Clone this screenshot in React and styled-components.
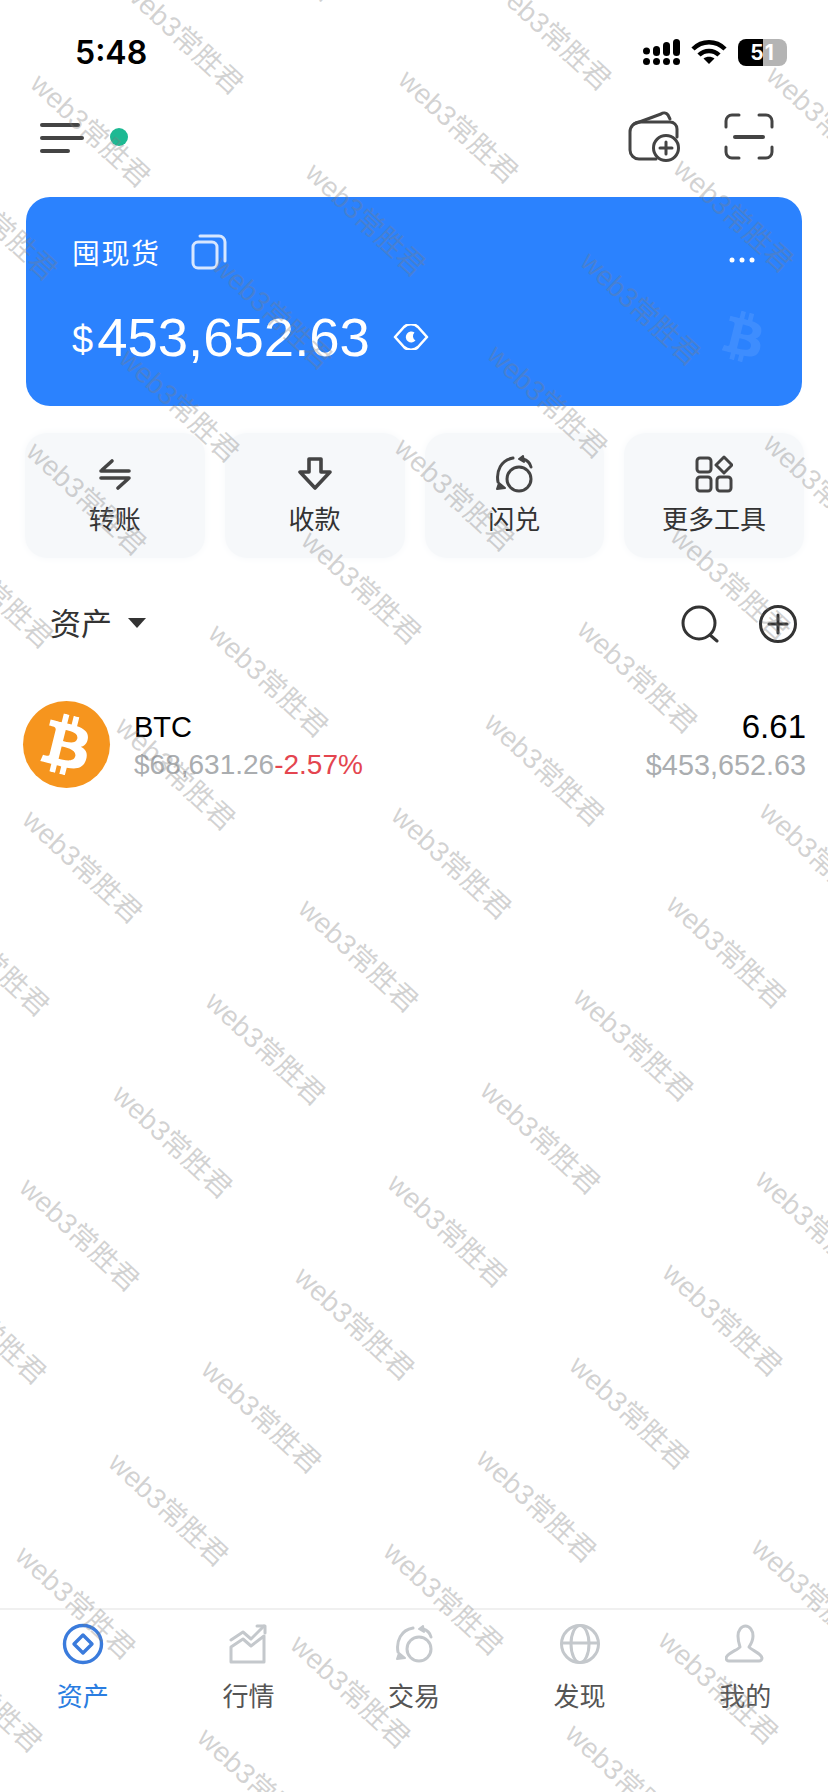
import React from 'react';
import styled, { createGlobalStyle } from 'styled-components';
import { FaBtc } from 'react-icons/fa';

const GlobalStyle = createGlobalStyle`
  * { box-sizing: border-box; }
  html, body { margin: 0; padding: 0; background: #fff; }
  body { font-family: "Liberation Sans", "Noto Sans CJK SC", sans-serif; }
`;

const Page = styled.div`
  position: relative;
  width: 828px;
  height: 1792px;
  overflow: hidden;
  display: flex;
  flex-direction: column;
  background: #fff;
`;

const StatusBar = styled.div`
  height: 104px;
  padding: 0 41px 0 75px;
  display: flex;
  align-items: center;
  justify-content: space-between;
`;

const Clock = styled.span`
  font-family: Inter, "Liberation Sans", sans-serif;
  font-size: 32px;
  font-weight: 600;
  color: #000;
`;

const StatusIcons = styled.div`
  display: flex;
  align-items: center;
  gap: 11px;
`;

const Battery = styled.div`
  width: 49px;
  height: 27px;
  border-radius: 8px;
  background: linear-gradient(90deg, #000 0 52%, #b4b4b4 52% 100%);
  color: #fff;
  font-family: Inter, "Liberation Sans", sans-serif;
  font-size: 21px;
  font-weight: 700;
  display: flex;
  align-items: center;
  justify-content: center;
  letter-spacing: 1px;
`;

const TopBar = styled.div`
  height: 66px;
  padding: 0 54px 0 39px;
  display: flex;
  align-items: center;
  justify-content: space-between;
`;

const IconGroup = styled.div`
  display: flex;
  align-items: center;
  gap: ${(p) => p.$gap}px;
`;

const OnlineDot = styled.span`
  width: 18px;
  height: 18px;
  border-radius: 50%;
  background: #1db993;
`;

const WalletCard = styled.div`
  margin: 27px 26px 0;
  height: 209px;
  padding: 37px 47px 0 46px;
  border-radius: 24px;
  background: #2b82fe;
  color: #fff;
`;

const CardTitleRow = styled.div`
  display: flex;
  align-items: center;
  height: 36px;
`;

const CardTitle = styled.span`
  font-size: 28px;
  letter-spacing: 1.5px;
  margin-right: 30px;
`;

const CardMenu = styled.span`
  display: flex;
  margin: 16px 0 0 auto;
`;

const BalanceRow = styled.div`
  display: flex;
  align-items: center;
  margin-top: 39px;
  height: 56px;
`;

const Dollar = styled.span`
  font-size: 38px;
  margin-right: 4px;
  padding-top: 6px;
`;

const Amount = styled.span`
  font-size: 54.5px;
  margin-right: 23px;
`;

const GhostCoin = styled(FaBtc)`
  margin: 0 -14px 0 auto;
  font-size: 50px;
  color: rgba(255, 255, 255, 0.09);
  transform: rotate(14deg);
`;

const Actions = styled.div`
  margin-top: 27px;
  padding: 0 24px 0 25px;
  display: grid;
  grid-template-columns: repeat(4, 1fr);
  gap: 20px;
`;

const ActionTile = styled.div`
  height: 125px;
  padding-top: 21px;
  border-radius: 22px;
  background: #f6f8fa;
  box-shadow: 0 0 8px #f6f8fa;
  display: flex;
  flex-direction: column;
  align-items: center;
  gap: 8px;
`;

const IconSlot = styled.div`
  height: ${(p) => p.$height}px;
  display: flex;
  align-items: center;
  justify-content: center;
`;

const ActionLabel = styled.span`
  font-size: 26px;
  line-height: 36px;
  color: #333;
  white-space: nowrap;
`;

const AssetsHead = styled.div`
  margin-top: 44px;
  height: 44px;
  padding: 0 31px 0 50px;
  display: flex;
  align-items: center;
  justify-content: space-between;
`;

const AssetsTitle = styled.div`
  display: flex;
  align-items: center;
  gap: 16px;
  padding-bottom: 5px;
  font-size: 31px;
  color: #333;
`;

const Caret = styled.span`
  width: 0;
  height: 0;
  border-left: 9px solid transparent;
  border-right: 9px solid transparent;
  border-top: 10px solid #333;
  margin-top: 2px;
`;

const CoinRow = styled.div`
  margin-top: 55px;
  padding: 0 22px 0 23px;
  display: flex;
  align-items: center;
`;

const Coin = styled.div`
  width: 87px;
  height: 87px;
  border-radius: 50%;
  background: #f6951e;
  color: #fff;
  font-size: 60px;
  display: flex;
  align-items: center;
  justify-content: center;
  margin-right: 24px;

  svg {
    transform: rotate(14deg);
  }
`;

const CoinInfo = styled.div`
  flex: 1;
  display: flex;
  flex-direction: column;
  align-items: ${(p) => (p.$right ? 'flex-end' : 'flex-start')};
  gap: 2px;
`;

const CoinName = styled.span`
  font-size: ${(p) => (p.$large ? 33 : 29)}px;
  line-height: 38px;
  color: #000;
`;

const CoinSub = styled.span`
  font-size: ${(p) => (p.$large ? 28.8 : 28)}px;
  line-height: 34px;
  color: #aaadb0;
`;

const Change = styled.span`
  color: #e4454f;
`;

const TabBar = styled.nav`
  margin-top: auto;
  height: 184px;
  border-top: 2px solid #f0f0f0;
  display: grid;
  grid-template-columns: repeat(5, 1fr);
`;

const Tab = styled.div`
  padding-top: 13px;
  display: flex;
  flex-direction: column;
  align-items: center;
  gap: 14px;
  font-size: 26px;
  line-height: 36px;
  color: ${(p) => (p.$active ? '#2a7de1' : '#555')};
`;

const WatermarkLayer = styled.div`
  position: absolute;
  inset: 0;
  pointer-events: none;
  overflow: hidden;
`;

const Mark = styled.span`
  position: absolute;
  width: 200px;
  margin: -20px 0 0 -100px;
  line-height: 40px;
  text-align: center;
  font-size: 28px;
  color: rgba(125, 125, 125, 0.34);
  white-space: nowrap;
  transform: rotate(43deg);
`;

const Line = ({ size = 40, w = size, stroke = '#444', sw = 3, children }) => (
  <svg
    width={w}
    height={size}
    viewBox={`0 0 ${w} ${size}`}
    fill="none"
    stroke={stroke}
    strokeWidth={sw}
    strokeLinecap="round"
    strokeLinejoin="round"
  >
    {children}
  </svg>
);

const SignalIcon = () => (
  <svg width="37" height="26" viewBox="0 0 37 26" fill="#000">
    {[3.5, 13.5, 23.5, 33.5].map((x) => (
      <circle key={x} cx={x} cy="22.5" r="3.5" />
    ))}
    <circle cx="3.5" cy="12" r="3.5" />
    <rect x="10" y="7" width="7" height="10" rx="3.5" />
    <rect x="20" y="3" width="7" height="14" rx="3.5" />
    <rect x="30" y="0" width="7" height="17" rx="3.5" />
  </svg>
);

const WifiIcon = () => (
  <svg width="36" height="26" viewBox="0 0 36 26" fill="none" stroke="#000" strokeWidth="4.5">
    <path d="M2 10 C11 1 25 1 34 10" />
    <path d="M8 16 C13.5 10.5 22.5 10.5 28 16" />
    <path d="M18 25 L12.5 19.5 C15.5 17 20.5 17 23.5 19.5 Z" fill="#000" stroke="none" />
  </svg>
);

const MenuIcon = () => (
  <Line w={46} size={34} sw={4}>
    <path d="M3 5 H39" />
    <path d="M3 18 H43" />
    <path d="M3 31 H29" />
  </Line>
);

const WalletIcon = () => (
  <Line w={56} size={54}>
    <path d="M29 49 H12 a9 9 0 0 1 -9 -9 V22 a10 10 0 0 1 10 -10 H43 a7 7 0 0 1 7 7 V27" />
    <path d="M7 14 L34 4 a5 5 0 0 1 7 1 L43 9" />
    <circle cx="39" cy="38" r="12.5" />
    <path d="M33 38 H45 M39 32 V44" />
  </Line>
);

const ScanIcon = () => (
  <Line w={50} size={48}>
    <path d="M2 14 V8 a6 6 0 0 1 6 -6 H15" />
    <path d="M35 2 H42 a6 6 0 0 1 6 6 V14" />
    <path d="M2 34 V39 a6 6 0 0 0 6 6 H15" />
    <path d="M35 45 H42 a6 6 0 0 0 6 -6 V34" />
    <path d="M11 24 H39" strokeWidth="4" />
  </Line>
);

const CopyIcon = () => (
  <Line w={36} size={36} stroke="#d7e7ff">
    <rect x="2" y="8" width="24" height="26" rx="5" />
    <path d="M9 2 H28 a6 6 0 0 1 6 6 V27 " />
  </Line>
);

const DotsIcon = () => (
  <svg width="26" height="6" viewBox="0 0 26 6" fill="#fff">
    <circle cx="3" cy="3" r="2.5" />
    <circle cx="13" cy="3" r="2.5" />
    <circle cx="23" cy="3" r="2.5" />
  </svg>
);

const EyeIcon = () => (
  <Line w={36} size={26} stroke="#fff" sw={2.6}>
    <path d="M2 13 L11 3 a10 10 0 0 1 14 0 L34 13 L25 23 a10 10 0 0 1 -14 0 Z" />
    <path d="M21.5 8.5 a5.5 5.5 0 1 0 1 8 a5 5 0 0 1 -1 -8 Z" fill="#fff" stroke="none" />
  </Line>
);

const SwapIcon = () => (
  <Line w={32} size={32} sw={3.6}>
    <path d="M2 13 H30 M13 3 L3 12" />
    <path d="M30 20 H2 M19 30 L29 21" />
  </Line>
);

const ReceiveIcon = () => (
  <Line w={34} size={34} sw={3.6}>
    <path d="M11 2 H23 V15 H32 L17 31 L2 15 H11 Z" />
  </Line>
);

const ExchangeIcon = ({ stroke = '#444' }) => (
  <Line w={38} size={38} stroke={stroke}>
    <circle cx="24" cy="24" r="12" />
    <path d="M3 27 C1 16 6 5 18 3" />
    <path d="M28 4 C32 5 35 8 36 12" />
    <path d="M28 1 L29 7 L24 4 Z M2 34 L10 33 L4 28 Z" fill={stroke} strokeWidth="2" />
  </Line>
);

const ToolsIcon = () => (
  <Line w={38} size={38}>
    <rect x="2" y="3" width="14" height="14" rx="3" />
    <path d="M29 2 L37 10 L29 18 L21 10 Z" />
    <rect x="2" y="22" width="14" height="14" rx="3" />
    <rect x="22" y="22" width="14" height="14" rx="3" />
  </Line>
);

const SearchIcon = () => (
  <Line w={38} size={38} stroke="#333">
    <circle cx="18" cy="18" r="16" />
    <path d="M29 30 L36 36" />
  </Line>
);

const PlusCircleIcon = () => (
  <Line w={38} size={38} stroke="#333">
    <circle cx="19" cy="19" r="17.5" />
    <path d="M10 19 H28 M19 10 V28" />
  </Line>
);

const AssetsTabIcon = () => (
  <Line w={42} size={42} stroke="#3a7bdc" sw={3.4}>
    <circle cx="21" cy="21" r="18.5" />
    <path d="M21 12 L30 21 L21 30 L12 21 Z" />
  </Line>
);

const MarketTabIcon = () => (
  <Line w={40} size={42} stroke="#c4c8cc">
    <path d="M3 17 L15 9 L23 16 L36 3" />
    <path d="M29 3 H37 V10" />
    <path d="M3 24 L15 16 L23 23 L36 13 V39 H3 Z" />
  </Line>
);

const GlobeTabIcon = () => (
  <Line w={42} size={42} stroke="#c4c8cc">
    <circle cx="21" cy="21" r="18.5" />
    <ellipse cx="21" cy="21" rx="9" ry="18.5" />
    <path d="M3 20 H39" />
  </Line>
);

const ProfileTabIcon = () => (
  <Line w={40} size={42} stroke="#c4c8cc">
    <path d="M13 13 a7.5 10 0 0 1 15 0 c0 5 -2 8 -4 11 c2 3 12 6 13 11 a3 3 0 0 1 -3 3 H4 a3 3 0 0 1 -3 -3 c1 -5 12 -8 14 -11 c-1 -3 -2 -6 -2 -11 Z" />
  </Line>
);

const actions = [
  { label: '转账', icon: <SwapIcon /> },
  { label: '收款', icon: <ReceiveIcon /> },
  { label: '闪兑', icon: <ExchangeIcon /> },
  { label: '更多工具', icon: <ToolsIcon /> },
];

const tabs = [
  { label: '资产', icon: <AssetsTabIcon />, active: true },
  { label: '行情', icon: <MarketTabIcon /> },
  { label: '交易', icon: <ExchangeIcon stroke="#c4c8cc" /> },
  { label: '发现', icon: <GlobeTabIcon /> },
  { label: '我的', icon: <ProfileTabIcon /> },
];

// the watermark repeats on a skewed grid
const marks = [];
for (let a = -6; a <= 12; a++) {
  for (let b = -14; b <= 10; b++) {
    const x = 90 + a * 275.2 + b * 93;
    const y = 131 + a * 89 - b * 93;
    if (x > -120 && x < 950 && y > -120 && y < 1910) marks.push({ x, y });
  }
}

const App = () => (
  <Page>
    <GlobalStyle />
    <StatusBar>
      <Clock>5:48</Clock>
      <StatusIcons>
        <SignalIcon />
        <WifiIcon />
        <Battery>51</Battery>
      </StatusIcons>
    </StatusBar>

    <TopBar>
      <IconGroup $gap={25}>
        <MenuIcon />
        <OnlineDot />
      </IconGroup>
      <IconGroup $gap={41}>
        <WalletIcon />
        <ScanIcon />
      </IconGroup>
    </TopBar>

    <WalletCard>
      <CardTitleRow>
        <CardTitle>囤现货</CardTitle>
        <CopyIcon />
        <CardMenu>
          <DotsIcon />
        </CardMenu>
      </CardTitleRow>
      <BalanceRow>
        <Dollar>$</Dollar>
        <Amount>453,652.63</Amount>
        <EyeIcon />
        <GhostCoin />
      </BalanceRow>
    </WalletCard>

    <Actions>
      {actions.map((item) => (
        <ActionTile key={item.label}>
          <IconSlot $height={40}>{item.icon}</IconSlot>
          <ActionLabel>{item.label}</ActionLabel>
        </ActionTile>
      ))}
    </Actions>

    <AssetsHead>
      <AssetsTitle>
        资产
        <Caret />
      </AssetsTitle>
      <IconGroup $gap={40}>
        <SearchIcon />
        <PlusCircleIcon />
      </IconGroup>
    </AssetsHead>

    <CoinRow>
      <Coin>
        <FaBtc />
      </Coin>
      <CoinInfo>
        <CoinName>BTC</CoinName>
        <CoinSub>
          $68,631.26<Change>-2.57%</Change>
        </CoinSub>
      </CoinInfo>
      <CoinInfo $right>
        <CoinName $large>6.61</CoinName>
        <CoinSub $large>$453,652.63</CoinSub>
      </CoinInfo>
    </CoinRow>

    <TabBar>
      {tabs.map((tab) => (
        <Tab key={tab.label} $active={tab.active}>
          <IconSlot $height={42}>{tab.icon}</IconSlot>
          {tab.label}
        </Tab>
      ))}
    </TabBar>

    <WatermarkLayer>
      {marks.map((m) => (
        <Mark key={`${m.x}-${m.y}`} style={{ left: m.x, top: m.y }}>
          web3常胜君
        </Mark>
      ))}
    </WatermarkLayer>
  </Page>
);

export default App;
